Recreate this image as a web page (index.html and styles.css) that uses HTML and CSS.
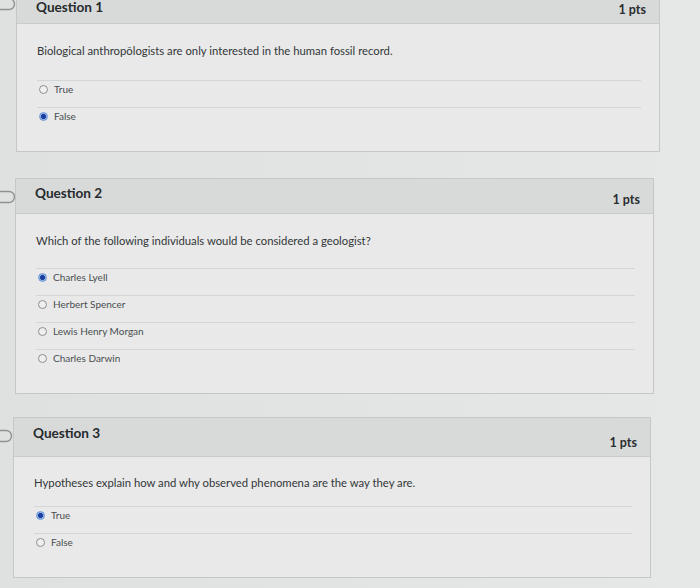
FILE: index.html
```html
<!DOCTYPE html>
<html lang="en">
<head>
<meta charset="utf-8">
<title>Quiz</title>
<link rel="stylesheet" href="styles.css">
</head>
<body>
<main class="quiz">
  <section class="question q1">
    <svg class="flag" width="16" height="14" viewBox="0 0 16 14"><path d="M-2 1.5 H9 A5.5 5.5 0 0 1 9 12.5 H-2" fill="none" stroke="#8f9291" stroke-width="1.4"/></svg>
    <div class="card">
      <header class="card-head">
        <h2 class="title">Question 1</h2>
        <span class="pts">1 pts</span>
      </header>
      <div class="card-body">
        <p class="prompt">Biological anthropōlogists are only interested in the human fossil record.</p>
        <ul class="answers">
          <li class="answer"><span class="radio"></span>True</li>
          <li class="answer"><span class="radio on"></span>False</li>
        </ul>
      </div>
    </div>
  </section>

  <section class="question q2">
    <svg class="flag" width="16" height="14" viewBox="0 0 16 14"><path d="M-2 1.5 H9 A5.5 5.5 0 0 1 9 12.5 H-2" fill="none" stroke="#8f9291" stroke-width="1.4"/></svg>
    <div class="card">
      <header class="card-head">
        <h2 class="title">Question 2</h2>
        <span class="pts">1 pts</span>
      </header>
      <div class="card-body">
        <p class="prompt">Which of the following individuals would be considered a geologist?</p>
        <ul class="answers">
          <li class="answer"><span class="radio on"></span>Charles Lyell</li>
          <li class="answer"><span class="radio"></span>Herbert Spencer</li>
          <li class="answer"><span class="radio"></span>Lewis Henry Morgan</li>
          <li class="answer"><span class="radio"></span>Charles Darwin</li>
        </ul>
      </div>
    </div>
  </section>

  <section class="question q3">
    <svg class="flag" width="16" height="14" viewBox="0 0 16 14"><path d="M-2 1.5 H8 A5.5 5.5 0 0 1 8 12.5 H-2" fill="none" stroke="#8f9291" stroke-width="1.4"/></svg>
    <div class="card">
      <header class="card-head">
        <h2 class="title">Question 3</h2>
        <span class="pts">1 pts</span>
      </header>
      <div class="card-body">
        <p class="prompt">Hypotheses explain how and why observed phenomena are the way they are.</p>
        <ul class="answers">
          <li class="answer"><span class="radio on"></span>True</li>
          <li class="answer"><span class="radio"></span>False</li>
        </ul>
      </div>
    </div>
  </section>
</main>
</body>
</html>
```

FILE: styles.css
```css
* { box-sizing: border-box; }

html, body {
  margin: 0;
  padding: 0;
  height: 100%;
  overflow: hidden;
}

body {
  background: linear-gradient(90deg, #dfe1e0 0%, #e3e5e4 60%, #e6e8e7 100%);
  font-family: Lato, "Open Sans", sans-serif;
  color: #3b3f42;
}

.quiz {
  display: flex;
  flex-direction: column;
}

.question {
  display: flex;
  align-items: flex-start;
}

.flag {
  flex: none;
  margin-top: 12px;
}

.q1 { margin-top: -12px; }
.q1 .flag { margin-top: 9px; }
.q1 .card { width: 644px; }
.q1 .card-head { padding-top: 9px; }
.q1 .pts { margin-top: 3px; }
.q1 .prompt { margin-bottom: 22px; }

.q2 { margin-top: 26px; }
.q2 .card { width: 639px; margin-left: -1px; }
.q2 .prompt { margin-bottom: 20px; }

.q3 { margin-top: 23px; }
.q3 .card { width: 638px; margin-left: -3px; }
.q3 .flag { margin-left: -2px; margin-right: 2px; }
.q3 .card-head { height: 39px; padding-top: 6px; }
.q3 .pts { margin-top: 10px; }
.q3 .card-body { padding-top: 19px; }
.q3 .prompt { margin-bottom: 16px; }

.card {
  border: 1px solid #c6c8c7;
  background: #e8e9e8;
}

.card-head {
  display: flex;
  justify-content: space-between;
  align-items: flex-start;
  height: 35px;
  padding: 5px 13px 0 19px;
  background: #d8dad9;
  border-bottom: 1px solid #c9cbca;
}

.title {
  margin: 0;
  font-size: 13.6px;
  line-height: 18px;
  font-weight: 700;
  color: #262a2d;
}

.pts {
  margin-top: 7px;
  font-size: 12.5px;
  line-height: 18px;
  font-weight: 700;
  color: #2a2e31;
}

.card-body {
  padding: 20px 18px 17px 20px;
}

.prompt {
  margin: 0 0 21px;
  font-size: 11.3px;
  line-height: 14px;
  color: #33373a;
}

.answers {
  list-style: none;
  margin: 0;
  padding: 0;
}

.answer {
  display: flex;
  align-items: center;
  gap: 6px;
  height: 27px;
  padding: 2px 0 11px 2px;
  border-top: 1px solid #d4d6d5;
  font-size: 10px;
  line-height: 13px;
  color: #4a4e51;
}

.radio {
  flex: none;
  width: 9px;
  height: 9px;
  border-radius: 50%;
  border: 1px solid #8d908f;
  background: #eeefee;
}

.radio.on {
  border-color: #6f97d6;
  background: radial-gradient(circle, #1c3f9e 0 2.2px, #8fb2e8 2.8px);
}
```
